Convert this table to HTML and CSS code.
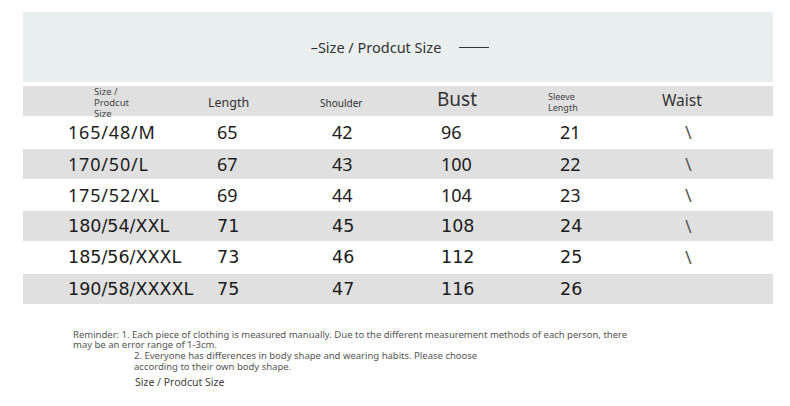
FILE: index.html
```html
<!DOCTYPE html>
<html>
<head>
<meta charset="utf-8">
<link rel="stylesheet" href="styles.css">
</head>
<body>
<div class="page">
  <div class="banner">
    <span class="banner-title">–Size / Prodcut Size</span>
    <span class="banner-rule"></span>
  </div>

  <div class="table">
    <div class="row head">
      <div class="cell h1"><span class="stack small">Size /<br>Prodcut<br>Size</span></div>
      <div class="cell h2"><span class="len">Length</span></div>
      <div class="cell h3"><span class="shoulder">Shoulder</span></div>
      <div class="cell h4"><span class="bust">Bust</span></div>
      <div class="cell h5"><span class="stack tiny">Sleeve<br>Length</span></div>
      <div class="cell h6"><span class="waist">Waist</span></div>
    </div>

    <div class="row white fa">
      <div class="cell d1">165/48/M</div>
      <div class="cell d2">65</div>
      <div class="cell d3">42</div>
      <div class="cell d4">96</div>
      <div class="cell d5">21</div>
      <div class="cell d6"><span class="slash">\</span></div>
    </div>
    <div class="row gray fa">
      <div class="cell d1">170/50/L</div>
      <div class="cell d2">67</div>
      <div class="cell d3">43</div>
      <div class="cell d4">100</div>
      <div class="cell d5">22</div>
      <div class="cell d6"><span class="slash">\</span></div>
    </div>
    <div class="row white fa">
      <div class="cell d1">175/52/XL</div>
      <div class="cell d2">69</div>
      <div class="cell d3">44</div>
      <div class="cell d4">104</div>
      <div class="cell d5">23</div>
      <div class="cell d6"><span class="slash">\</span></div>
    </div>
    <div class="row gray fb">
      <div class="cell d1">180/54/XXL</div>
      <div class="cell d2">71</div>
      <div class="cell d3">45</div>
      <div class="cell d4">108</div>
      <div class="cell d5">24</div>
      <div class="cell d6"><span class="slash">\</span></div>
    </div>
    <div class="row white fb">
      <div class="cell d1">185/56/XXXL</div>
      <div class="cell d2">73</div>
      <div class="cell d3">46</div>
      <div class="cell d4">112</div>
      <div class="cell d5">25</div>
      <div class="cell d6"><span class="slash">\</span></div>
    </div>
    <div class="row gray fb">
      <div class="cell d1">190/58/XXXXL</div>
      <div class="cell d2">75</div>
      <div class="cell d3">47</div>
      <div class="cell d4">116</div>
      <div class="cell d5">26</div>
      <div class="cell d6"></div>
    </div>
  </div>

  <div class="notes">
    <p class="note1">Reminder: 1. Each piece of clothing is measured manually. Due to the different measurement methods of each person, there<br>may be an error range of 1-3cm.</p>
    <p class="note2">2. Everyone has differences in body shape and wearing habits. Please choose<br>according to their own body shape.</p>
    <p class="note3">Size / Prodcut Size</p>
  </div>
</div>
</body>
</html>
```

FILE: styles.css
```css
html, body {
  margin: 0;
  padding: 0;
  background: #ffffff;
}

body {
  font-family: "Noto Sans", sans-serif;
  color: #222;
}

.page {
  width: 790px;
  height: 406px;
  padding: 12px 0 0 23px;
  box-sizing: border-box;
  overflow: hidden;
}

.banner {
  width: 750px;
  height: 70px;
  background: #e9efef;
  display: flex;
  align-items: center;
  justify-content: center;
  gap: 18px;
  padding-left: 4px;
  box-sizing: border-box;
  margin-bottom: 4px;
}

.banner-title {
  font-size: 14.5px;
  color: #333;
}

.banner-rule {
  display: inline-block;
  width: 30px;
  height: 1.5px;
  background: #333;
  margin-top: 1px;
}

.table {
  width: 750px;
}

.row {
  display: grid;
  grid-template-columns: 167px 110px 120px 110px 100px 143px;
  align-items: center;
}

.row.head {
  height: 30px;
  background: #e0e0e0;
  color: #333;
}

.row.white {
  height: 32.5px;
  background: #ffffff;
}

.row.gray {
  height: 30px;
  background: #e0e0e0;
}

.cell {
  white-space: nowrap;
}

.stack {
  display: block;
  line-height: 11px;
}

.small {
  font-size: 9.5px;
  color: #444;
}

.tiny {
  font-size: 9px;
  color: #444;
  line-height: 10.5px;
}

.len {
  font-size: 12.5px;
}

.shoulder {
  font-size: 10px;
}

.bust {
  font-size: 19px;
}

.waist {
  font-size: 15.5px;
}

.h1 { padding-left: 71px; }
.h2 { padding-left: 18px; padding-bottom: 3px; }
.h3 { padding-left: 20px; padding-bottom: 4px; }
.h4 { padding-left: 17px; padding-bottom: 7px; }
.h5 { padding-left: 18px; }
.h6 { padding-left: 32px; padding-bottom: 5px; }

.fa {
  font-size: 18px;
  color: #1c1c1c;
}

.fa .d1 {
  letter-spacing: 0.8px;
}

.fb .cell {
  font-family: "DejaVu Sans", sans-serif;
  font-size: 17.5px;
  color: #1c1c1c;
}

.d1 { padding-left: 45px; }
.d2 { padding-left: 27px; }
.d3 { padding-left: 32px; }
.d4 { padding-left: 21px; }
.d5 { padding-left: 30px; }
.d6 { padding-left: 55px; }

.cell .slash {
  font-family: "Noto Sans", sans-serif;
  font-size: 18px;
  color: #555;
}

.notes {
  padding-top: 26px;
  font-size: 9.5px;
  color: #555;
  line-height: 10.7px;
}

.notes p {
  margin: 0;
}

.note1 {
  padding-left: 50px;
}

.note2 {
  padding-left: 111px;
}

.note3 {
  padding-left: 112px;
  padding-top: 5px;
  font-size: 10.5px;
  color: #444;
}
```
